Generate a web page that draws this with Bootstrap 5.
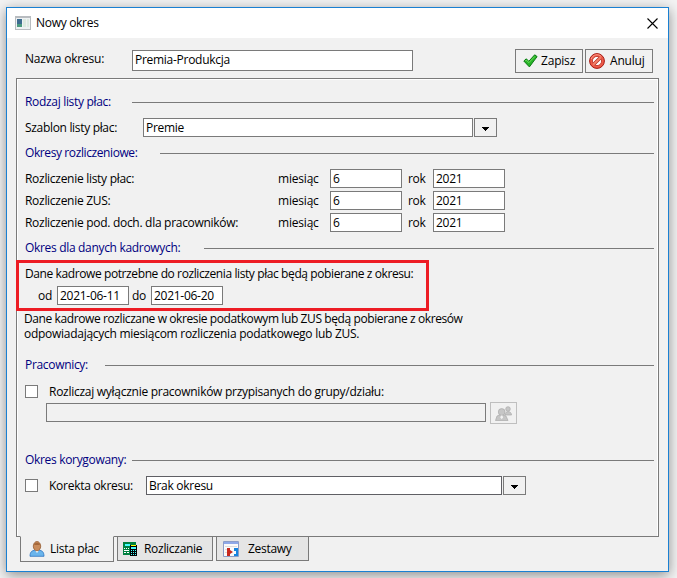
<!DOCTYPE html>
<html lang="pl">
<head>
<meta charset="utf-8">
<meta name="viewport" content="width=device-width, initial-scale=1">
<title>Nowy okres</title>
<link href="https://cdn.jsdelivr.net/npm/bootstrap@5.3.0/dist/css/bootstrap.min.css" rel="stylesheet">
<style>
  html, body { height: 578px; overflow: hidden; }
  body { background: #f3f3f3; color: #000; font: 12px/16px "Open Sans", "Noto Sans", sans-serif; letter-spacing: -.32px; white-space: nowrap; }
  .win { width: 663px; height: 565px; margin: 7px 0 0 6px; border: 1px solid #1a80d2; background: #f1f1f1; box-shadow: 0 3px 12px rgba(0,0,0,.42); }
  .title-bar { height: 30px; background: #fff; padding: 0 10px 0 8px; }
  .title-text { margin-left: 5px; letter-spacing: -.3px; }
  .head-row { height: 40px; padding: 11px 15px 0 18px; }
  .head-label { width: 107px; padding-top: 2px; letter-spacing: -.2px; }
  .form-control.fld { height: 19px; min-height: 0; padding: 0 2px 1px; border: 1px solid #7a7a7a; border-radius: 0; background: #fff; color: #000; font: inherit; line-height: 16px; flex: none; letter-spacing: -.28px; }
  .form-control.fld-name { width: 281px; height: 21px; margin-top: 1px; padding-bottom: 2px; }
  .form-control.fld-template { width: 330px; }
  .form-control.fld-num { width: 72px; }
  .form-control.fld-off { width: 440px; margin-top: 1px; background: #f1f1f1; }
  .form-control.fld-dark { width: 356px; border-color: #5f5f64; }
  .btn.tool { width: 68px; height: 24px; padding: 0; border: 1px solid #7a7a7a; border-radius: 0; background: #f1f1f1; color: #000; font: inherit; letter-spacing: -.2px; }
  .btn.drop { width: 23px; height: 19px; padding: 2px 0 0; border: 1px solid #7a7a7a; border-radius: 0; background: #f1f1f1; margin-left: 1px; line-height: 1; }
  .btn.people { width: 27px; height: 22px; padding: 1px 0 0; border: 1px solid #bfbfbf; border-radius: 0; background: #f1f1f1; margin-left: 4px; line-height: 1; opacity: 1; }
  .sheet { width: 643px; height: 459px; margin-left: 9px; border: 1px solid #7a7a7a; box-shadow: inset 1px 1px #fff, inset -1px 0 #fff; padding: 15px 4px 0 8px; }
  .sec { height: 17px; color: #000080; }
  .sec-line { height: 1px; margin-top: 8px; background: #7a7a7a; flex: 1; }
  .fr { height: 19px; }
  .sq.form-check-input { width: 13px; height: 13px; margin: 0; border: 1px solid #7a7a7a; border-radius: 0; flex: none; background-color: #fff; }
  .red-frame { width: 413px; height: 51px; border: 3px solid #ed1c24; margin: 3px 0 0 -9px; padding: 3px 0 0 6px; }
  .date-row { margin-top: 4px; padding-left: 13px; }
  .tight { letter-spacing: -.4px; }
  .para { line-height: 15px; margin-left: -1px; letter-spacing: -.27px; }
  .tabs { margin: -1px 0 0 13px; letter-spacing: -.29px; }
  .tb { border: 1px solid #7a7a7a; background: #e5e5e5; height: 25px; color: #000; }
  .tb-on { width: 94px; height: 26px; background: #f1f1f1; border-top-color: #f1f1f1; margin-right: 3px; padding-left: 8px; }
  .tb-calc { width: 96px; padding-left: 5px; margin-right: 3px; }
  .tb-sets { width: 93px; padding-left: 6px; }
  .tab-text { margin-left: 5px; } .tab-text-calc { margin-left: 7px; } .tab-text-sets { margin-left: 9px; }
  .w19 { width: 19px; } .w22 { width: 22px; padding-left: 3px; } .w31 { width: 31px; padding-left: 6px; }
  .w52 { width: 52px; letter-spacing: -.2px; } .w80 { width: 80px; } .w97 { width: 97px; } .w107 { width: 107px; } .w118 { width: 118px; }
  .w135 { width: 135px; letter-spacing: -.4px; } .w179 { width: 179px; } .w253 { width: 253px; letter-spacing: -.29px; }
  .gap-t7 { margin-top: 7px; } .gap-t8 { margin-top: 8px; } .gap-t16 { margin-top: 16px; } .gap-t28 { margin-top: 28px; }
  .row-gap { row-gap: 3px; }
  .group-check { margin-top: 11px; height: 13px; }
  .group-pick { margin-top: 4px; height: 22px; padding-left: 21px; }
  .check-text { margin-left: 11px; letter-spacing: -.27px; }
  .ic-save { margin-left: 7px; margin-right: 3px; } .ic-stop { margin-left: 3px; margin-right: 5px; } .next-tool { margin-left: 2px; }
  svg { display: block; flex: none; }
</style>
<script src="https://cdn.jsdelivr.net/npm/bootstrap@5.3.0/dist/js/bootstrap.bundle.min.js"></script>
</head>
<body>
<main class="win">
  <header class="title-bar d-flex align-items-center">
    <svg width="16" height="14" viewBox="0 0 16 14"><path fill="#b8bcc0" d="M0 0h16v14H0z"/><path fill="#eef1f3" d="M1 2h14v11H1z"/><path fill="#3d6c90" d="M2 3h5v5H2z"/><path fill="#4b9a80" d="M2 8h5v3H2z"/><path fill="#dce9e0" d="M8 3h3v8H8zM12 3h2v8h-2z"/></svg>
    <span class="title-text">Nowy okres</span>
    <svg class="ms-auto" width="11" height="11" viewBox="0 0 11 11"><path d="M.5.5l10 10M10.5.5l-10 10" stroke="#000" stroke-width="1.1"/></svg>
  </header>
  <div class="head-row d-flex align-items-start">
    <label class="head-label">Nazwa okresu:</label>
    <input class="form-control fld fld-name" value="Premia-Produkcja">
    <button class="btn tool ms-auto d-flex align-items-center"><svg class="ic-save" width="15" height="14" viewBox="0 0 15 14"><path d="M.8 7l2.500-2.200 2.500 2.500L11.700.8l2.400 1.800L6.400 12.900z" fill="#28b428" stroke="#0b7a14" stroke-linejoin="round"/><path d="M2.300 7l1-1 2.500 2.700 6-6.200" fill="none" stroke="#6ee05a"/></svg>Zapisz</button>
    <button class="btn tool next-tool d-flex align-items-center"><svg class="ic-stop" width="16" height="16" viewBox="0 0 16 16"><circle cx="8" cy="8" r="7.400" fill="#ee5a48" stroke="#a51a14"/><circle cx="8" cy="8" r="4.600" fill="#fff" stroke="#b52a20" stroke-width=".8"/><path d="M5 11l6-6" stroke="#b52a20" stroke-width="3.400"/><path d="M4.200 11.800l7.600-7.600" stroke="#f58068" stroke-width="2"/><path d="M2.300 6a6 6 0 0 1 10-2.500" fill="none" stroke="#ff9c8a"/></svg>Anuluj</button>
  </div>

  <section class="sheet">
    <div class="sec d-flex align-items-start"><span class="w107">Rodzaj listy płac:</span><i class="sec-line"></i></div>
    <div class="fr gap-t7 d-flex align-items-center"><label class="w118">Szablon listy płac:</label><input class="form-control fld fld-template" value="Premie"><button class="btn drop d-flex align-items-center justify-content-center"><svg width="7" height="4"><path d="M0 0h7v1H6v1H5v1H4v1H3V3H2V2H1V1H0z"/></svg></button></div>
    <div class="sec gap-t8 d-flex align-items-start"><span class="w135">Okresy rozliczeniowe:</span><i class="sec-line"></i></div>
    <div class="d-grid gap-t7 row-gap">
      <div class="fr d-flex align-items-center"><span class="w253">Rozliczenie listy płac:</span><span class="w52">miesiąc</span><input class="form-control fld fld-num" value="6"><span class="w31">rok</span><input class="form-control fld fld-num" value="2021"></div>
      <div class="fr d-flex align-items-center"><span class="w253">Rozliczenie ZUS:</span><span class="w52">miesiąc</span><input class="form-control fld fld-num" value="6"><span class="w31">rok</span><input class="form-control fld fld-num" value="2021"></div>
      <div class="fr d-flex align-items-center"><span class="w253">Rozliczenie pod. doch. dla pracowników:</span><span class="w52">miesiąc</span><input class="form-control fld fld-num" value="6"><span class="w31">rok</span><input class="form-control fld fld-num" value="2021"></div>
    </div>
    <div class="sec gap-t8 d-flex align-items-start"><span class="w179">Okres dla danych kadrowych:</span><i class="sec-line"></i></div>
    <div class="red-frame">
      <div class="tight">Dane kadrowe potrzebne do rozliczenia listy płac będą pobierane z okresu:</div>
      <div class="fr date-row d-flex align-items-center"><span class="w19">od</span><input class="form-control fld fld-num" value="2021-06-11"><span class="w22">do</span><input class="form-control fld fld-num" value="2021-06-20"></div>
    </div>
    <div class="para"><span class="tight">Dane kadrowe rozliczane w okresie podatkowym lub ZUS będą pobierane z okresów</span><br>odpowiadających miesiącom rozliczenia podatkowego lub ZUS.</div>
    <div class="sec gap-t16 d-flex align-items-start"><span class="w80">Pracownicy:</span><i class="sec-line"></i></div>
    <div class="group-check d-flex align-items-center"><input type="checkbox" class="form-check-input sq"><label class="check-text">Rozliczaj wyłącznie pracowników przypisanych do grupy/działu:</label></div>
    <div class="group-pick d-flex"><input class="form-control fld fld-off" disabled><button class="btn people d-flex align-items-center justify-content-center" disabled><svg width="17" height="15" viewBox="0 0 17 15"><g fill="#c6c6c6" stroke="#ababab" stroke-width=".7"><path d="M10 9c0-4.500 6.500-4.500 6.500 0z"/><circle cx="13" cy="3" r="2.300"/><path d="M.5 14.500l1.500-4.500 3-1.200h3l3 1.200 2 4.500z"/><circle cx="6.700" cy="6" r="3.400"/></g><path d="M5.900 9.500h1.600l.5 2-1.300 1.800-1.300-1.800z" fill="#f3f3f3"/></svg></button></div>
    <div class="sec gap-t28 d-flex align-items-start"><span class="w107">Okres korygowany:</span><i class="sec-line"></i></div>
    <div class="fr gap-t7 d-flex align-items-center"><input type="checkbox" class="form-check-input sq"><label class="w97 check-text">Korekta okresu:</label><input class="form-control fld fld-dark" value="Brak okresu"><button class="btn drop d-flex align-items-center justify-content-center"><svg width="7" height="4"><path d="M0 0h7v1H6v1H5v1H4v1H3V3H2V2H1V1H0z"/></svg></button></div>
  </section>

  <nav class="tabs d-flex align-items-start">
    <div class="tb tb-on d-flex align-items-center"><svg width="16" height="16" viewBox="0 0 16 16"><path d="M1 15.300c0-5 2.500-6.300 7-6.300s7 1.300 7 6.300z" fill="#6bb5ec" stroke="#2d74c0" stroke-width=".8"/><path d="M6 9l2 3 2-3z" fill="#fff"/><ellipse cx="8" cy="5.200" rx="3.700" ry="4.600" fill="#c98c5c" stroke="#93592f" stroke-width=".8"/><path d="M5 4c1-3 5-3 6 0z" fill="#a5683a"/></svg><span class="tab-text">Lista płac</span></div>
    <div class="tb tb-calc d-flex align-items-center"><svg width="14" height="14" viewBox="0 0 14 14"><path fill="#008040" d="M0 0h13v13H0z"/><path fill="#4ff" d="M2 2h5v2H2z"/><path fill="#fff" d="M1 6h1v1H1zM3 6h1v1H3zM5 6h1v1H5zM1 8h5v1H1zM1 10h2v1H1zM4 10h2v1H4z"/><path d="M7 3h7v11H7z"/><path fill="#ff0" d="M8 3h5v1H8z"/><path fill="#4ff" d="M8 5h5v2H8zM8 8h1v1H8zM10 8h1v1h-1zM12 8h1v1h-1zM8 10h1v1H8zM10 10h1v1h-1zM12 10h1v1h-1zM8 12h1v1H8zM10 12h1v1h-1zM12 12h1v1h-1z"/></svg><span class="tab-text-calc">Rozliczanie</span></div>
    <div class="tb tb-sets d-flex align-items-center"><svg width="16" height="16" viewBox="0 0 16 16"><path d="M.5.5h15v15H.5z" fill="#fafafa" stroke="#8b9dc8"/><path fill="#8ea8e8" d="M1 1h14v2H1z"/><path fill="#ddd" d="M2 5h12v1H2zM2 8h2v1H2zM2 11h2v1H2z"/><path fill="#c8281e" d="M4 7h3v8H4zM7 9l3 2-3 2z"/><path fill="#1784df" d="M11 7h4v8h-4v-2h2v-3h-2z"/></svg><span class="tab-text-sets">Zestawy</span></div>
  </nav>
</main>
</body>
</html>
